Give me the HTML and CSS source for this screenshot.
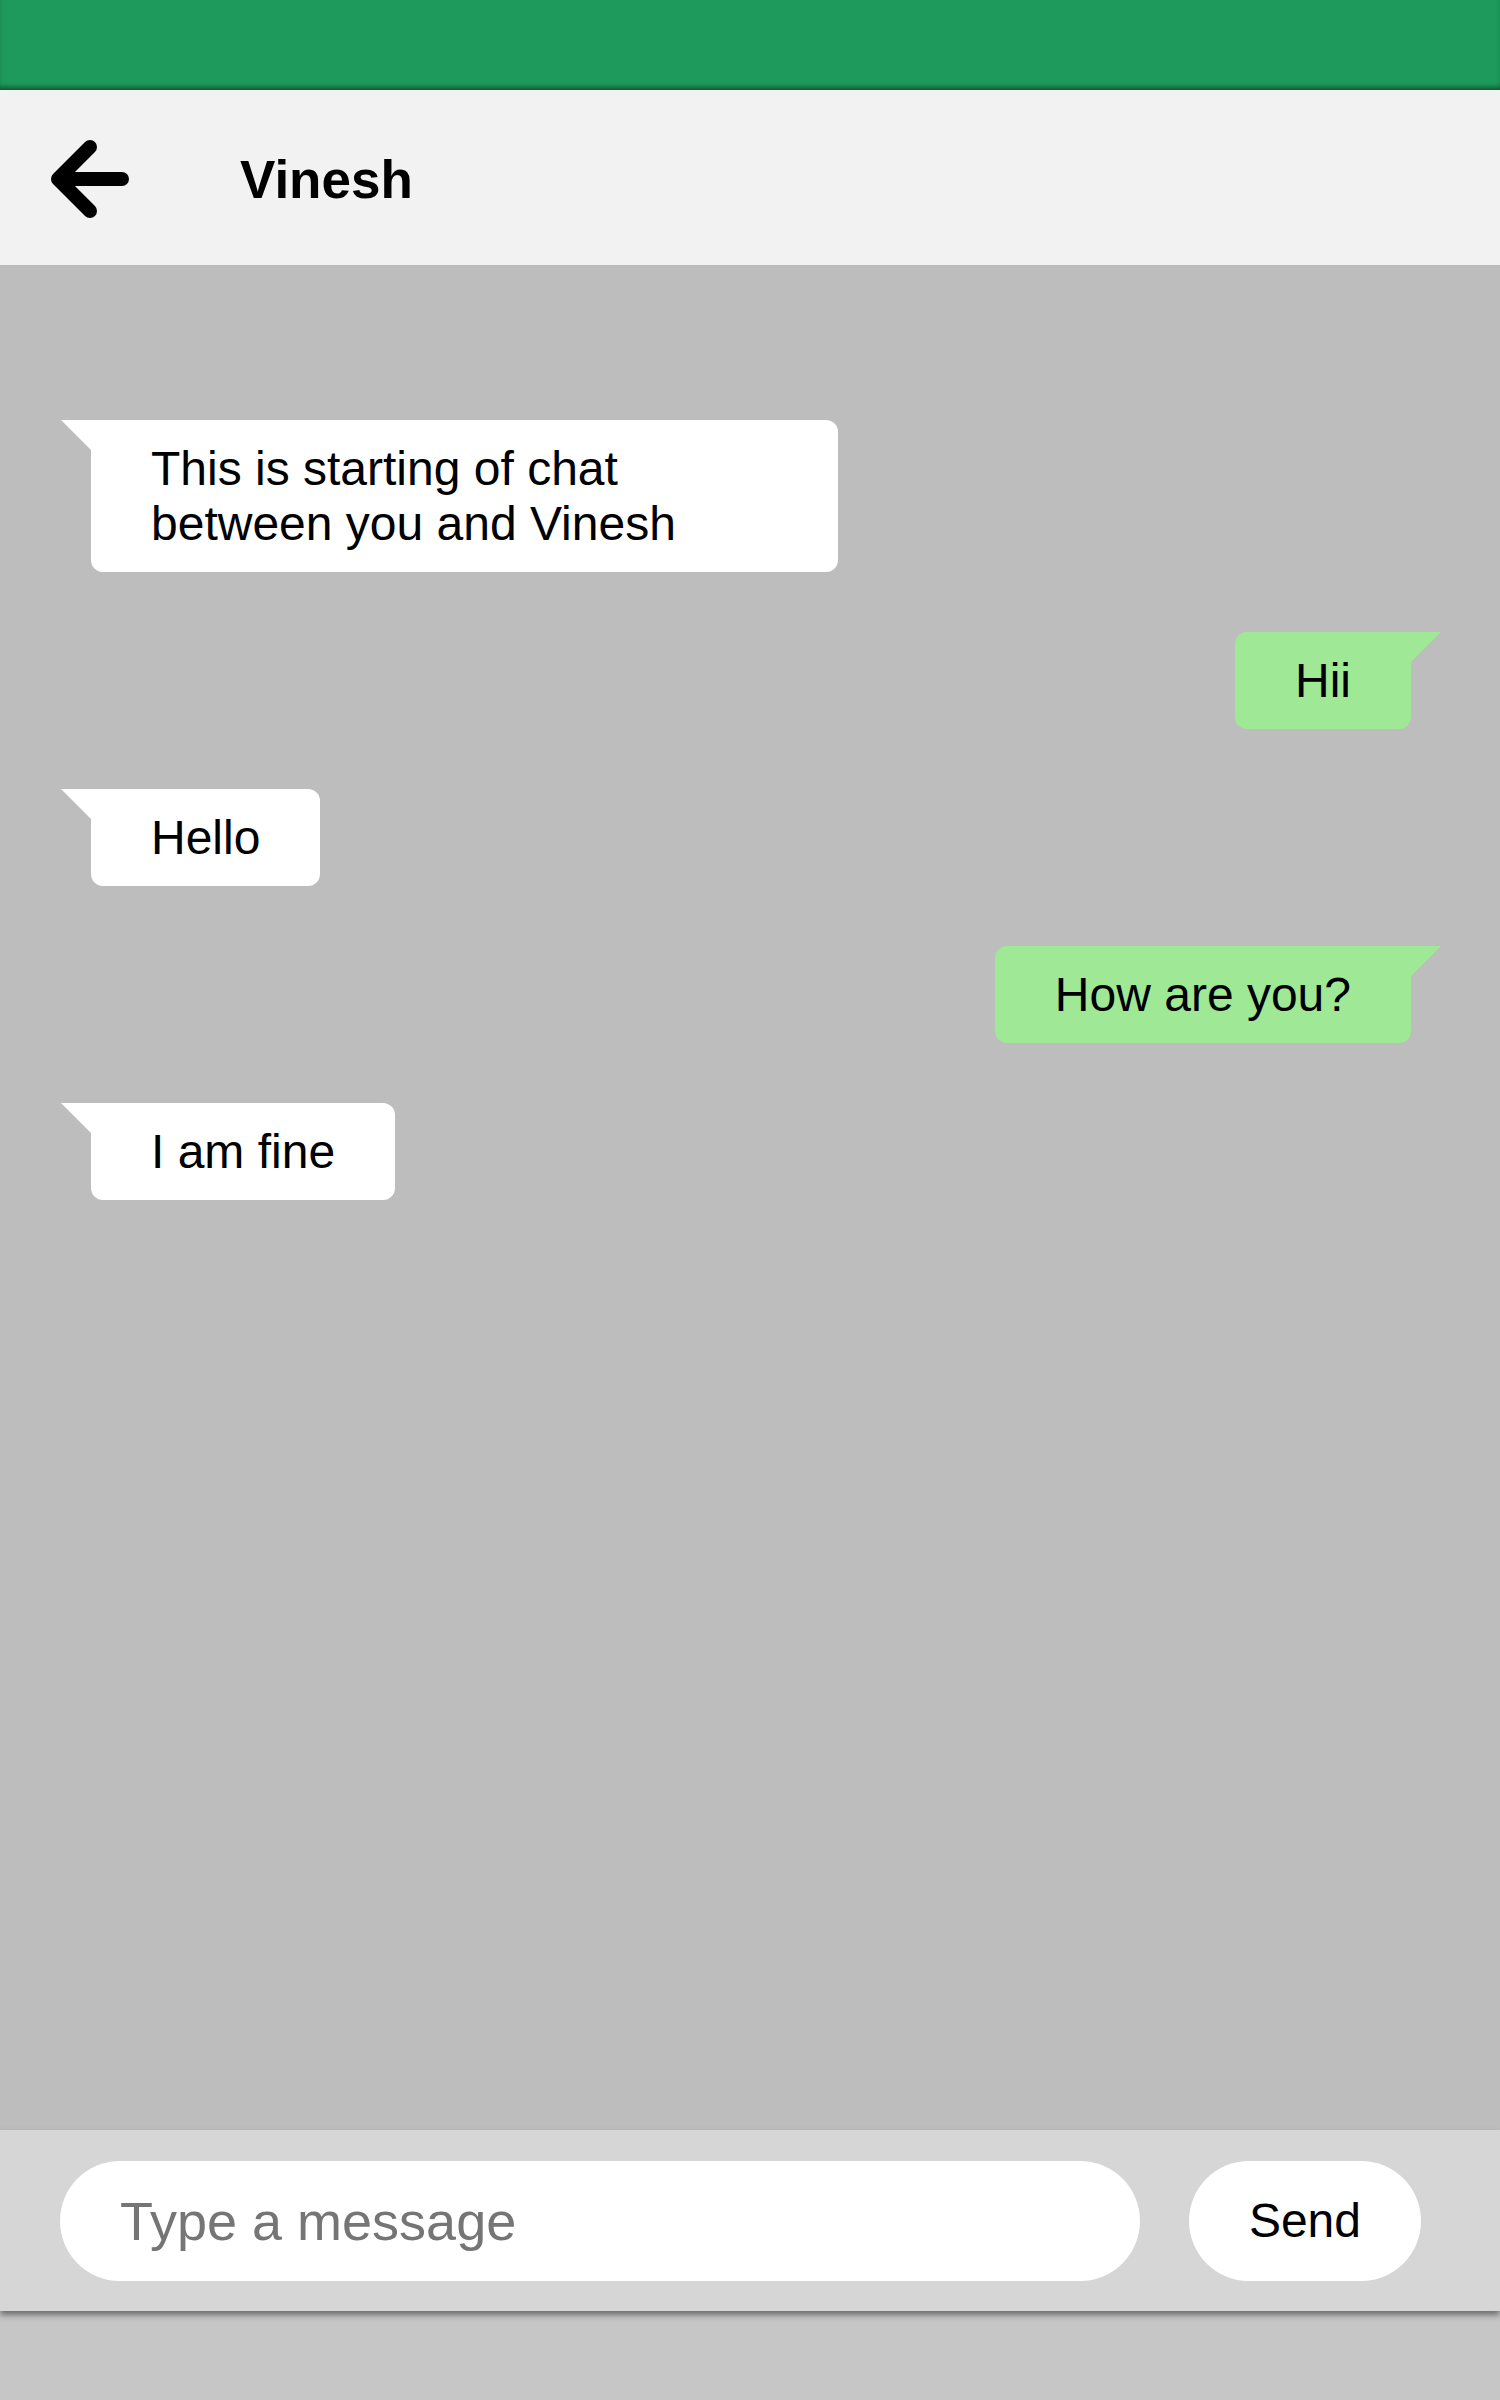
FILE: index.html
```html
<!DOCTYPE html>
<html lang="en">
<head>
<meta charset="utf-8">
<title>Chat with Vinesh</title>
<link rel="stylesheet" href="styles.css">
</head>
<body>
<div class="app">
  <div class="status-bar"></div>
  <header class="chat-header">
    <svg class="back-icon" width="92" height="92" viewBox="0 0 92 92" aria-hidden="true">
      <path d="M14 46 H78 M46 14 L14 46 L46 78" fill="none" stroke="#000" stroke-width="14" stroke-linecap="round" stroke-linejoin="round"/>
    </svg>
    <h1 class="contact-name">Vinesh</h1>
  </header>
  <main class="chat-body">
    <div class="msg in">This is starting of chat between you and Vinesh</div>
    <div class="msg out">Hii</div>
    <div class="msg in">Hello</div>
    <div class="msg out">How are you?</div>
    <div class="msg in">I am fine</div>
  </main>
  <footer class="composer">
    <input class="message-input" type="text" placeholder="Type a message">
    <button class="send-btn" type="button">Send</button>
  </footer>
</div>
</body>
</html>
```
FILE: styles.css
```css
* { box-sizing: border-box; }

html, body {
  margin: 0;
  padding: 0;
}

body {
  background: #c6c6c6;
  font-family: "Liberation Sans", Arial, sans-serif;
  min-height: 2400px;
}

.app {
  display: flex;
  flex-direction: column;
  width: 1500px;
}

.status-bar {
  height: 90px;
  background: #1e9b5c;
  box-shadow: inset 0 -5px 5px -2px rgba(0, 0, 0, 0.45);
}

.chat-header {
  height: 175px;
  background: #f2f2f2;
  display: flex;
  align-items: center;
  padding-left: 44px;
  padding-top: 3px;
}

.back-icon {
  display: block;
  flex: none;
}

.contact-name {
  margin: 0 0 0 104px;
  font-size: 53px;
  font-weight: bold;
  color: #000;
  line-height: normal;
}

.chat-body {
  height: 1865px;
  background: #bdbdbd;
  display: flex;
  flex-direction: column;
  align-items: flex-start;
  gap: 60px;
  padding-top: 155px;
}

.msg {
  position: relative;
  max-width: 747px;
  padding: 21px 60px;
  font-size: 48px;
  line-height: normal;
  color: #000;
  border-radius: 12px;
}

.msg.in {
  margin-left: 91px;
  background: #ffffff;
  border-top-left-radius: 0;
}

.msg.in::before {
  content: "";
  position: absolute;
  top: 0;
  left: -30px;
  width: 0;
  height: 0;
  border-top: 30px solid #ffffff;
  border-left: 30px solid transparent;
}

.msg.out {
  align-self: flex-end;
  margin-right: 89px;
  background: #9fe895;
  border-top-right-radius: 0;
}

.msg.out::after {
  content: "";
  position: absolute;
  top: 0;
  right: -30px;
  width: 0;
  height: 0;
  border-top: 30px solid #9fe895;
  border-right: 30px solid transparent;
}

.composer {
  height: 181px;
  background: #d6d6d6;
  display: flex;
  align-items: center;
  gap: 49px;
  padding: 0 79px 0 60px;
  box-shadow: 0 4px 6px rgba(0, 0, 0, 0.45);
  position: relative;
}

.message-input {
  flex: 1;
  height: 120px;
  border: none;
  outline: none;
  border-radius: 60px;
  background: #ffffff;
  padding: 0 60px;
  font-family: "Liberation Sans", Arial, sans-serif;
  font-size: 54px;
  color: #000;
}

.message-input::placeholder {
  color: #757575;
}

.send-btn {
  height: 120px;
  border: none;
  border-radius: 60px;
  background: #ffffff;
  padding: 0 60px;
  font-family: "Liberation Sans", Arial, sans-serif;
  font-size: 48px;
  color: #000;
}
```
